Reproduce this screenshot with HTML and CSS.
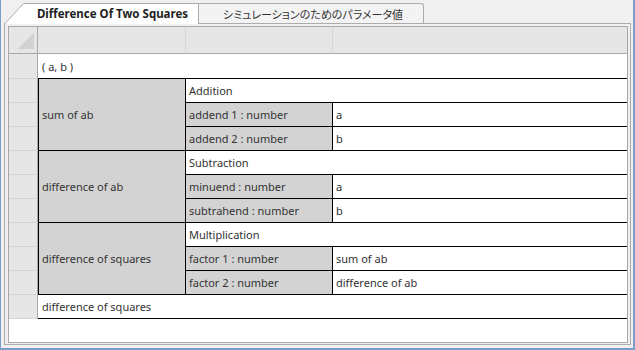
FILE: index.html
```html
<!DOCTYPE html>
<html lang="en">
<head>
    <meta charset="UTF-8">
    <meta name="viewport" content="width=device-width, initial-scale=1.0">
    <title>Difference Of Two Squares</title>
    <link rel="stylesheet" href="styles.css">
</head>
<body>

    <div class="window">
        <!-- Tabs -->
        <div class="tabs">
            <div class="tab tab-active">
                <svg class="tab-shape" width="195" height="21" viewBox="0 0 195 21">
                    <path d="M0.5 21 L19.5 0.5 L194.5 0.5 L194.5 21" fill="#ffffff" stroke="#acacac" stroke-width="1"/>
                </svg>
                <span class="tab-label">Difference Of Two Squares</span>
            </div>
            <div class="tab tab-jp">
                <span class="tab-label">シミュレーションのためのパラメータ値</span>
            </div>
        </div>

        <!-- Sheet -->
        <div class="panel">
            <div class="sheet">
                <div class="grid">
                    <div class="hd hd-corner"><span class="corner-mark"></span></div>
                    <div class="hd"></div>
                    <div class="hd"></div>
                    <div class="hd hd-last"></div>

                    <div class="rh"></div>
                    <div class="cell full">( a, b )</div>

                    <div class="rh"></div>
                    <div class="cell name">sum of ab</div>
                    <div class="cell op">Addition</div>
                    <div class="rh"></div>
                    <div class="cell param">addend 1 : number</div>
                    <div class="cell value">a</div>
                    <div class="rh"></div>
                    <div class="cell param">addend 2 : number</div>
                    <div class="cell value">b</div>

                    <div class="rh"></div>
                    <div class="cell name">difference of ab</div>
                    <div class="cell op">Subtraction</div>
                    <div class="rh"></div>
                    <div class="cell param">minuend : number</div>
                    <div class="cell value">a</div>
                    <div class="rh"></div>
                    <div class="cell param">subtrahend : number</div>
                    <div class="cell value">b</div>

                    <div class="rh"></div>
                    <div class="cell name">difference of squares</div>
                    <div class="cell op">Multiplication</div>
                    <div class="rh"></div>
                    <div class="cell param">factor 1 : number</div>
                    <div class="cell value">sum of ab</div>
                    <div class="rh"></div>
                    <div class="cell param">factor 2 : number</div>
                    <div class="cell value">difference of ab</div>

                    <div class="rh"></div>
                    <div class="cell full">difference of squares</div>
                </div>
            </div>
        </div>
    </div>

</body>
</html>
```

FILE: styles.css
```css
/* General Styles */
body {
    margin: 0;
    padding: 0;
    background-color: #f0f0f0;
    font-family: "Noto Sans", "Open Sans", sans-serif;
    font-size: 11px;
    color: #333;
}

/* Window frame */
.window {
    width: 635px;
    height: 350px;
    box-sizing: border-box;
    border-left: 1px solid #7b9bc9;
    border-right: 2px solid #7b9bc9;
    border-bottom: 2px solid #7b9bc9;
    padding: 3px 2px 3px 3px;
    display: flex;
    flex-direction: column;
}

/* Tabs */
.tabs {
    display: flex;
    align-items: flex-end;
    height: 20px;
    flex-shrink: 0;
}
.tab {
    box-sizing: border-box;
    display: flex;
    align-items: center;
    justify-content: center;
    white-space: nowrap;
}
.tab-active {
    position: relative;
    z-index: 1;
    width: 195px;
    height: 21px;
    margin-bottom: -1px;
    padding-left: 22px;
    font-size: 11.5px;
    font-weight: bold;
    color: #1e1e1e;
}
.tab-shape {
    position: absolute;
    left: 0;
    top: 0;
}
.tab-label {
    position: relative;
}
.tab-jp {
    width: 225px;
    height: 20px;
    padding-left: 4px;
    background-color: #f3f3f3;
    border-top: 1px solid #acacac;
    border-right: 1px solid #acacac;
    border-top-right-radius: 3px;
    font-family: "Noto Sans CJK JP", sans-serif;
    font-feature-settings: "palt";
    font-size: 11px;
    color: #333;
}

/* Panel */
.panel {
    flex: 1;
    box-sizing: border-box;
    border: 1px solid #acacac;
    padding: 2px 2px 1px 3px;
    display: flex;
}
.sheet {
    flex: 1;
    border: 1px solid #a9a9a9;
    background-color: #fff;
}

/* Grid */
.grid {
    display: grid;
    grid-template-columns: 29px 148px 147px 294px;
    grid-template-rows: 27px 25px repeat(10, 24px);
}
.grid > div {
    box-sizing: border-box;
}
.hd {
    background-color: #e6e6e6;
    border-bottom: 1px solid #a9a9a9;
    border-right: 1px solid #d6d6d6;
}
.hd-corner {
    border-right-color: #a9a9a9;
    display: flex;
    align-items: flex-end;
    justify-content: flex-end;
    padding: 0 3px 4px 0;
}
.hd-last {
    border-right: none;
}
.corner-mark {
    width: 17px;
    height: 16px;
    background: linear-gradient(to bottom right, transparent 50%, #d2d2d2 50%);
}
.rh {
    background-color: #e6e6e6;
    border-right: 1px solid #a9a9a9;
    border-bottom: 1px solid #d4d4d4;
}

/* Cells */
.cell {
    display: flex;
    align-items: center;
    padding-left: 3px;
    border-bottom: 1px solid #000;
    white-space: nowrap;
}
.full {
    grid-column: span 3;
    padding-left: 4px;
}
.name {
    grid-row: span 3;
    background-color: #d3d3d3;
    border-left: 1px solid #000;
    border-right: 1px solid #000;
}
.op {
    grid-column: span 2;
}
.param {
    background-color: #d3d3d3;
    border-right: 1px solid #000;
}
```
